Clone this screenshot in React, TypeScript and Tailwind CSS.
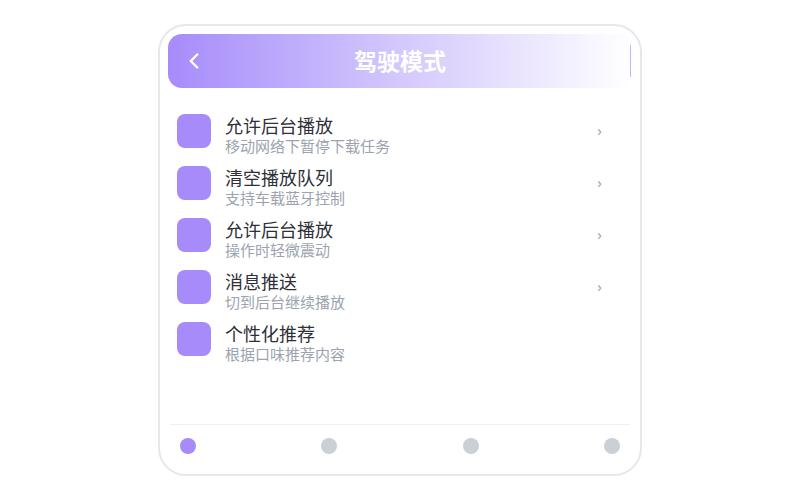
import { ChevronLeft } from 'lucide-react';

const items = [
  { title: '允许后台播放', sub: '移动网络下暂停下载任务', arrow: true },
  { title: '清空播放队列', sub: '支持车载蓝牙控制', arrow: true },
  { title: '允许后台播放', sub: '操作时轻微震动', arrow: true },
  { title: '消息推送', sub: '切到后台继续播放', arrow: true },
  { title: '个性化推荐', sub: '根据口味推荐内容', arrow: false },
];

export default function App() {
  return (
    <div
      className="w-[800px] h-[500px] bg-white flex items-center justify-center"
      style={{ fontFamily: '"Noto Sans", "Noto Sans CJK SC", sans-serif' }}
    >
      {/* 手机外框 */}
      <div className="w-[484px] h-[452px] border-2 border-[#e5e7eb] rounded-[28px] bg-white p-2 flex flex-col">
        {/* 顶部渐变标题栏 */}
        <div className="h-[54px] rounded-[14px] bg-gradient-to-r from-[#a78bfa] via-[#d4c8fc] to-white flex items-center pl-[13px] pr-px relative">
          <ChevronLeft size={26} strokeWidth={2.25} className="text-white shrink-0" />
          <h1 className="absolute inset-0 flex items-center justify-center text-[23px] font-bold text-white">
            驾驶模式
          </h1>
          <div className="ml-auto w-px h-8 bg-[#c4b5fd]" />
        </div>

        {/* 设置列表 */}
        <div className="flex flex-col pl-[9px] pr-[30px] mt-[26px]">
          {items.map((it, i) => (
            <div key={i} className="h-[52px] flex items-start">
              <div className="w-[34px] h-[34px] rounded-[8px] bg-[#a78bfa] shrink-0" />
              <div className="flex flex-col ml-[14px] pt-[2px]">
                <span className="text-[18px] leading-[21px] text-[#2f2f38]">{it.title}</span>
                <span className="text-[15px] leading-[19px] text-[#9ca3af]">{it.sub}</span>
              </div>
              {it.arrow && (
                <span className="ml-auto mt-[5px] text-[15px] text-[#9ca3af]">›</span>
              )}
            </div>
          ))}
        </div>

        {/* 底部分页点 */}
        <div className="mt-auto mx-[2px] border-t border-[#f0f0f3] pt-[13px] pb-3 px-[10px] flex justify-between">
          <div className="w-4 h-4 rounded-full bg-[#a78bfa]" />
          <div className="w-4 h-4 rounded-full bg-[#cbd0d6]" />
          <div className="w-4 h-4 rounded-full bg-[#cbd0d6]" />
          <div className="w-4 h-4 rounded-full bg-[#cbd0d6]" />
        </div>
      </div>
    </div>
  );
}
